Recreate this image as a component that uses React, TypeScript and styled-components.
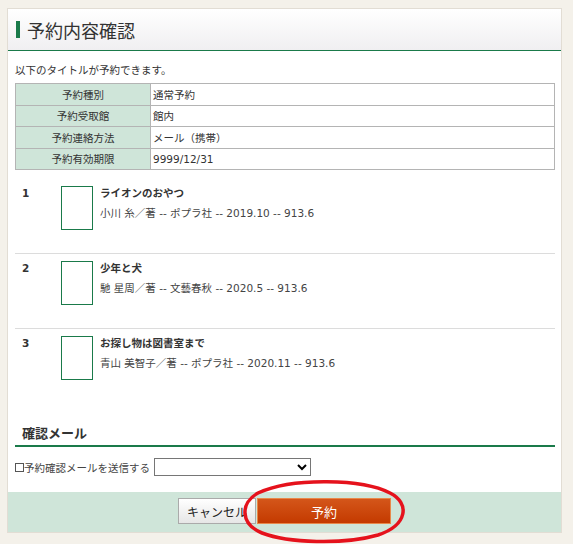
import styled, { createGlobalStyle } from "styled-components";

const GlobalStyle = createGlobalStyle`
  html, body {
    margin: 0;
    padding: 0;
    background: #f4f1ea;
  }
  body {
    font-family: "DejaVu Sans", "Noto Sans CJK JP", sans-serif;
    color: #333;
  }
`;

type Book = {
  no: number;
  title: string;
  detail: string;
};

const books: Book[] = [
  { no: 1, title: "ライオンのおやつ", detail: "小川 糸／著 -- ポプラ社 -- 2019.10 -- 913.6" },
  { no: 2, title: "少年と犬", detail: "馳 星周／著 -- 文藝春秋 -- 2020.5 -- 913.6" },
  { no: 3, title: "お探し物は図書室まで", detail: "青山 美智子／著 -- ポプラ社 -- 2020.11 -- 913.6" },
];

const info = [
  ["予約種別", "通常予約"],
  ["予約受取館", "館内"],
  ["予約連絡方法", "メール（携帯）"],
  ["予約有効期限", "9999/12/31"],
];

const App = () => {
  return (
    <>
      <GlobalStyle />
      <Page>
        <Panel>
          <Header>
            <HeaderTitle>予約内容確認</HeaderTitle>
          </Header>
          <Body>
            <Intro>以下のタイトルが予約できます。</Intro>
            <InfoTable>
              <tbody>
                {info.map(([k, v]) => (
                  <tr key={k}>
                    <LabelCell>{k}</LabelCell>
                    <ValueCell>{v}</ValueCell>
                  </tr>
                ))}
              </tbody>
            </InfoTable>

            <BookList>
              {books.map((b, i) => (
                <BookRow key={b.no} $last={i === books.length - 1}>
                  <BookNo>{b.no}</BookNo>
                  <Cover />
                  <BookText>
                    <BookTitle>{b.title}</BookTitle>
                    <BookDetail>{b.detail}</BookDetail>
                  </BookText>
                </BookRow>
              ))}
            </BookList>

            <SectionTitle>確認メール</SectionTitle>
            <MailRow>
              <CheckLabel>
                <Check type="checkbox" />
                予約確認メールを送信する
              </CheckLabel>
              <Select>
                <option></option>
              </Select>
            </MailRow>
          </Body>
          <Footer>
            <CancelButton>キャンセル</CancelButton>
            <ReserveWrap>
              <ReserveButton>予約</ReserveButton>
              <Circle viewBox="0 0 170 62" aria-hidden="true">
                <path
                  d="M20 12 C55 -4 125 -2 152 12 C172 22 170 44 140 54 C105 64 50 62 24 52 C2 43 2 22 20 12 Z"
                  fill="none"
                  stroke="#e5121c"
                  strokeWidth="3.5"
                />
              </Circle>
            </ReserveWrap>
          </Footer>
        </Panel>
      </Page>
    </>
  );
};

export default App;

const Page = styled.div`
  width: 573px;
  height: 544px;
  padding: 8px 11px 0 7px;
  box-sizing: border-box;
`;

const Panel = styled.div`
  width: 555px;
  background: #fff;
  border: 1px solid #e2ddd4;
  box-sizing: border-box;
`;

const Header = styled.div`
  height: 41px;
  background: linear-gradient(#ffffff, #f0eff1);
  border-bottom: 1px solid #1a7a4a;
  display: flex;
  align-items: center;
  padding-left: 8px;
`;

const HeaderTitle = styled.h1`
  margin: 0;
  font-size: 18px;
  font-weight: normal;
  color: #333;
  font-family: "Noto Sans CJK JP", sans-serif;
  display: flex;
  align-items: center;
  gap: 7px;
  &::before {
    content: "";
    width: 4px;
    height: 17px;
    background: #1a7a4a;
  }
`;

const Body = styled.div`
  padding: 0 6px 16px 7px;
`;

const Intro = styled.p`
  margin: 12px 0 6px;
  font-size: 10.5px;
  line-height: 14px;
`;

const InfoTable = styled.table`
  width: 540px;
  border-collapse: collapse;
  font-size: 10.5px;
`;

const LabelCell = styled.td`
  width: 134px;
  height: 20.5px;
  padding: 0;
  background: #cfe5d9;
  border: 1px solid #b4b4b4;
  text-align: center;
`;

const ValueCell = styled.td`
  padding: 0 0 0 2px;
  border: 1px solid #b4b4b4;
`;

const BookList = styled.div`
  margin-top: 9px;
`;

const BookRow = styled.div<{ $last: boolean }>`
  display: flex;
  align-items: flex-start;
  height: 67px;
  padding-top: 7px;
  border-bottom: ${(p) => (p.$last ? "none" : "1px solid #dcdcdc")};
`;

const BookNo = styled.div`
  width: 46px;
  padding-left: 7px;
  box-sizing: border-box;
  font-size: 10.5px;
  font-weight: bold;
  line-height: 14px;
`;

const Cover = styled.div`
  width: 32px;
  height: 44px;
  border: 1px solid #1a7a4a;
  box-sizing: border-box;
`;

const BookText = styled.div`
  margin-left: 7px;
`;

const BookTitle = styled.div`
  font-size: 10.5px;
  font-weight: bold;
  line-height: 14px;
`;

const BookDetail = styled.div`
  font-size: 10.5px;
  line-height: 14px;
  margin-top: 6px;
  color: #444;
`;

const SectionTitle = styled.h2`
  margin: 22px 0 0;
  padding: 0 0 2px 7px;
  font-size: 13px;
  font-weight: bold;
  border-bottom: 2px solid #1a7a4a;
  line-height: 18px;
`;

const MailRow = styled.div`
  display: flex;
  align-items: center;
  margin-top: 11px;
  gap: 4px;
`;

const CheckLabel = styled.label`
  display: flex;
  align-items: center;
  font-size: 10.5px;
  color: #444;
`;

const Check = styled.input`
  appearance: none;
  width: 9px;
  height: 9px;
  margin: 0;
  border: 1px solid #555;
  background: #fff;
`;

const Select = styled.select`
  width: 157px;
  height: 18px;
  border: 1px solid #767676;
  border-radius: 0;
  background: #fff;
  font-size: 10px;
`;

const Footer = styled.div`
  height: 40px;
  background: #cfe5d9;
  display: flex;
  justify-content: center;
  align-items: flex-start;
  padding-top: 6px;
  box-sizing: border-box;
  gap: 1px;
`;

const CancelButton = styled.button`
  width: 78px;
  height: 26px;
  border: 1px solid #aaa;
  background: linear-gradient(#ffffff, #e6e6e6);
  font-family: "Noto Sans CJK JP", sans-serif;
  font-size: 12px;
  color: #222;
  padding: 0;
  border-radius: 0;
`;

const ReserveWrap = styled.div`
  position: relative;
`;

const ReserveButton = styled.button`
  width: 134px;
  height: 26px;
  border: 1px solid #e8884a;
  background: linear-gradient(#d4561a, #c43a00);
  color: #fff;
  font-family: "Noto Sans CJK JP", sans-serif;
  font-size: 13px;
  padding: 0;
  border-radius: 0;
`;

const Circle = styled.svg`
  position: absolute;
  left: -20px;
  top: -17px;
  width: 172px;
  height: 62px;
  pointer-events: none;
  overflow: visible;
`;
